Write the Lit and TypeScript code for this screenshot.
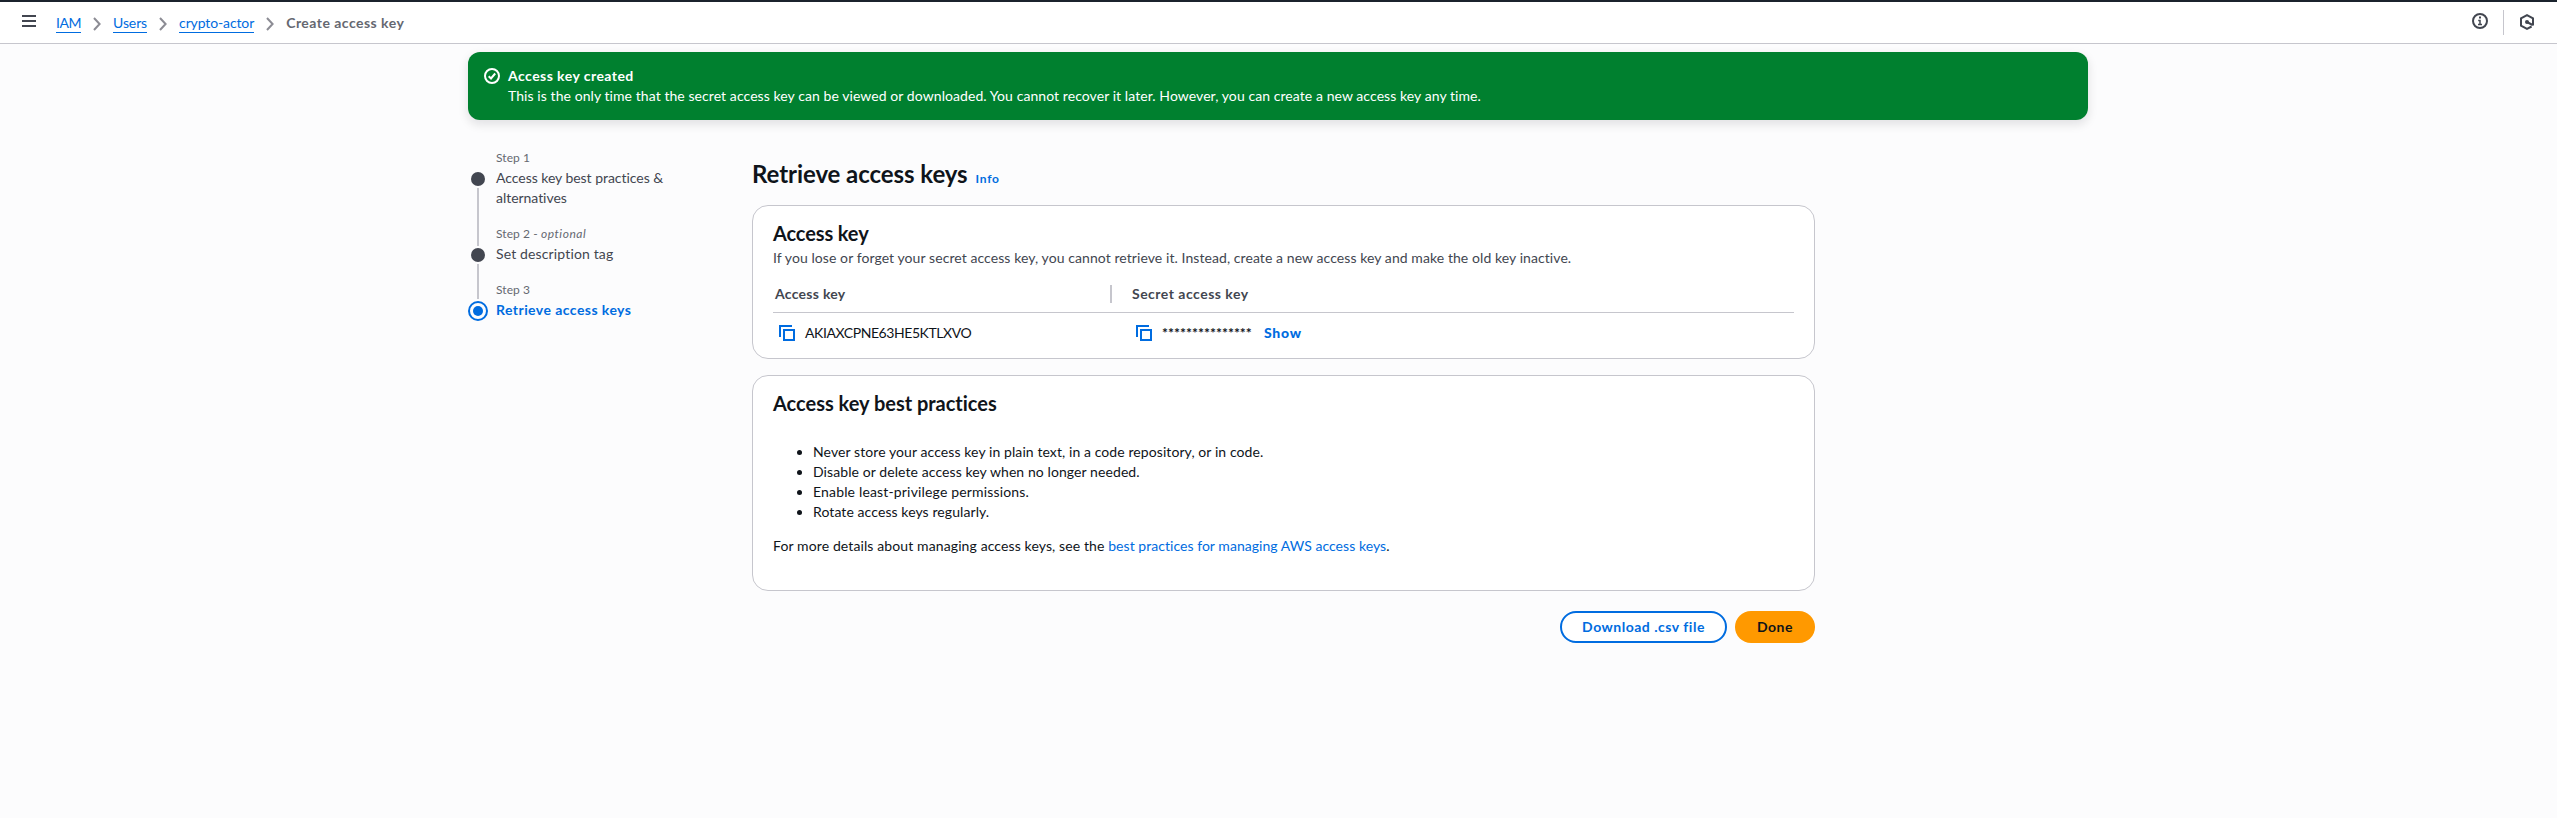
import { LitElement, html, css, nothing } from "lit";
import { customElement, property } from "lit/decorators.js";

const copyIcon = html`<svg class="copy" width="16" height="16" viewBox="0 0 16 16" fill="none" stroke="#006ce0" stroke-width="2">
  <path d="M1 12V1h12" /><rect x="5" y="5" width="10" height="10" />
</svg>`;

const chevron = html`<svg class="chevron" width="8" height="14" viewBox="0 0 8 14" fill="none" stroke="#8c8c94" stroke-width="2">
  <path d="M1 1l5.6 6L1 13" />
</svg>`;

@customElement("app-breadcrumbs")
class AppBreadcrumbs extends LitElement {
  static styles = css`
    :host { display: flex; height: 41px; background: #fff; border-top: 2px solid #1b232d; border-bottom: 1px solid #c6c6cd; box-sizing: content-box; }
    svg { display: block; flex: none; }
    .menu { margin: 13px 20px 0 22px; }
    .trail { display: flex; gap: 12px; padding-top: 11px; flex: 1; }
    .link { display: block; height: 19px; line-height: 19px; border-bottom: 1px solid #006ce0; color: #006ce0; white-space: nowrap; }
    .iam { letter-spacing: -0.46px; }
    .users { letter-spacing: -0.1px; }
    .user { letter-spacing: -0.12px; }
    .chevron { margin-top: 4px; }
    .current { line-height: 19px; font-weight: 700; color: #656871; letter-spacing: 0.47px; white-space: nowrap; }
    .tools { display: flex; }
    .info { margin: 11px 15px 0 0; }
    .rule { width: 1px; height: 25px; margin-top: 8px; background: #c6c6cd; }
    .hex { margin: 11px 22px 0 15px; }
  `;
  render() {
    return html`
      <svg class="menu" width="14" height="12" viewBox="0 0 14 12" stroke="#424650" stroke-width="2"><path d="M0 1h14M0 6h14M0 11h14" /></svg>
      <nav class="trail">
        <a class="link iam">IAM</a>${chevron}
        <a class="link users">Users</a>${chevron}
        <a class="link user">crypto-actor</a>${chevron}
        <span class="current">Create access key</span>
      </nav>
      <div class="tools">
        <svg class="info" width="16" height="16" viewBox="0 0 16 16" fill="none" stroke="#424650" stroke-width="2">
          <circle cx="8" cy="8" r="7" /><path d="M6.2 7.5H8V11.5M6 11.5h4" stroke-width="1.5" /><path d="M7 4.5h2" />
        </svg>
        <div class="rule"></div>
        <svg class="hex" width="16" height="18" viewBox="0 0 16 18" fill="none" stroke="#424650" stroke-width="2">
          <path d="M14 12.4V5.3L8 2.1 2 5.3v7.4l6 3.2 4.6-2.4" /><circle cx="8" cy="9" r="2" fill="#424650" stroke="none" /><path d="M8 9l5.6 3" />
        </svg>
      </div>
    `;
  }
}

@customElement("app-step")
class AppStep extends LitElement {
  @property() label = "";
  @property({ type: Boolean }) optional = false;
  @property({ type: Boolean, reflect: true }) active = false;
  @property({ type: Boolean, reflect: true }) beforeactive = false;
  static styles = css`
    :host { display: grid; grid-template-columns: 20px 1fr; column-gap: 8px; }
    .rail { display: flex; flex-direction: column; align-items: center; padding-top: 22px; }
    .dot { width: 14px; height: 14px; border-radius: 50%; background: #424650; flex: none; }
    .line { width: 2px; flex: 1; margin: 2px 0 -20px; background: #c6c6cd; }
    :host([beforeactive]) .line { margin-bottom: -17px; }
    :host([active]) .rail { padding-top: 19px; }
    :host([active]) .dot { box-sizing: border-box; width: 20px; height: 20px; border: 2px solid #006ce0; background: #006ce0 content-box; padding: 3px; }
    .text { padding-bottom: 18px; }
    .label { font-size: 12px; line-height: 16px; color: #656871; margin-bottom: 2px; letter-spacing: 0.08px; }
    .label em { letter-spacing: 0.55px; }
    .title { line-height: 20px; color: #424650; width: 180px; letter-spacing: -0.04px; }
    :host([beforeactive]) .title { letter-spacing: 0.14px; }
    :host([active]) .title { color: #006ce0; font-weight: 700; letter-spacing: 0.44px; }
  `;
  render() {
    return html`
      <div class="rail"><div class="dot"></div>${this.active ? nothing : html`<div class="line"></div>`}</div>
      <div class="text">
        <div class="label">${this.label}${this.optional ? html` - <em>optional</em>` : nothing}</div>
        <div class="title"><slot></slot></div>
      </div>
    `;
  }
}

@customElement("app-root")
class AppRoot extends LitElement {
  static styles = css`
    :host { display: block; min-height: 818px; background: #fcfcfd; color: #0f141a; font: 400 14px/20px Lato, "Open Sans", sans-serif; font-variant-ligatures: none; }
    svg { display: block; flex: none; }
    .page { width: 1620px; margin-left: 468px; padding-top: 8px; }
    .flash { display: flex; gap: 8px; height: 68px; box-sizing: border-box; padding: 14px 16px; border-radius: 12px; background: #00802f; color: #fff; box-shadow: 0 4px 10px 1px rgba(0, 7, 22, 0.1); white-space: nowrap; }
    .check { margin-top: 2px; }
    .flash-title { font-weight: 700; letter-spacing: 0.45px; }
    .flash-body { letter-spacing: 0.071px; }
    .columns { display: grid; grid-template-columns: 284px 1063px; }
    .steps { padding-top: 30px; }
    .main { padding-top: 39px; }
    .heading { display: flex; align-items: baseline; gap: 8px; margin-bottom: 16px; height: 30px; }
    h1, h2, p, ul { margin: 0; }
    h1 { font-size: 24px; line-height: 30px; letter-spacing: -0.07px; }
    .info { font-size: 12px; font-weight: 700; color: #006ce0; letter-spacing: 0.7px; }
    .card { box-sizing: border-box; border: 1px solid #c6c6cd; border-radius: 16px; background: #fff; padding: 15px 20px 0; margin-bottom: 16px; }
    .keys { height: 154px; }
    .practices { height: 216px; margin-bottom: 20px; }
    h2 { font-size: 20px; line-height: 24px; letter-spacing: -0.02px; }
    .keys h2 { letter-spacing: -0.12px; }
    .desc { color: #424650; margin-top: 3px; letter-spacing: 0.075px; }
    .row { display: grid; grid-template-columns: 339px 1fr; }
    .head { margin-top: 16px; padding-bottom: 8px; border-bottom: 1px solid #c6c6cd; color: #424650; font-weight: 700; }
    .first { padding-left: 2px; border-right: 2px solid #c6c6cd; line-height: 18px; margin-top: 1px; letter-spacing: 0.28px; height: 18px; }
    .second { padding-left: 20px; letter-spacing: 0.49px; }
    .values { padding-top: 10px; }
    .cell { display: flex; gap: 10px; padding-left: 6px; }
    .secret { padding-left: 24px; }
    .copy { margin-top: 2px; }
    .id { letter-spacing: -0.42px; }
    .mask { width: 91px; font-weight: 700; letter-spacing: 0.04px; }
    .show { color: #006ce0; font-weight: 900; letter-spacing: 0.75px; margin-left: 1px; }
    ul { list-style: none; padding: 0 0 0 24px; margin-top: 27px; }
    li { display: flex; gap: 11px; letter-spacing: 0.085px; }
    li:nth-child(3) { letter-spacing: 0.164px; }
    li::before { content: ""; width: 5px; height: 5px; border-radius: 50%; background: #0f141a; margin-top: 8px; }
    .more { margin-top: 14px; letter-spacing: 0.112px; }
    .more a { color: #006ce0; letter-spacing: 0.04px; }
    .actions { display: flex; justify-content: flex-end; gap: 8px; }
    .btn { box-sizing: border-box; height: 32px; border-radius: 16px; font-weight: 700; letter-spacing: 0.508px; text-align: center; padding-top: 6px; }
    .download { width: 167px; border: 2px solid #006ce0; background: #fff; color: #006ce0; padding-top: 4px; }
    .done { width: 80px; background: #ff9900; }
  `;
  render() {
    return html`
      <app-breadcrumbs></app-breadcrumbs>
      <div class="page">
        <div class="flash">
          <svg class="check" width="16" height="16" viewBox="0 0 16 16" fill="none" stroke="#fff" stroke-width="2">
            <circle cx="8" cy="8" r="7" /><path d="M4.7 8.2l2.3 2.3 4.2-5" />
          </svg>
          <div>
            <div class="flash-title">Access key created</div>
            <div class="flash-body">This is the only time that the secret access key can be viewed or downloaded. You cannot recover it later. However, you can create a new access key any time.</div>
          </div>
        </div>
        <div class="columns">
          <div class="steps">
            <app-step label="Step 1">Access key best practices &amp; alternatives</app-step>
            <app-step label="Step 2" optional beforeactive>Set description tag</app-step>
            <app-step label="Step 3" active>Retrieve access keys</app-step>
          </div>
          <div class="main">
            <div class="heading"><h1>Retrieve access keys</h1><a class="info">Info</a></div>
            <section class="card keys">
              <h2>Access key</h2>
              <p class="desc">If you lose or forget your secret access key, you cannot retrieve it. Instead, create a new access key and make the old key inactive.</p>
              <div class="row head"><div class="first">Access key</div><div class="second">Secret access key</div></div>
              <div class="row values">
                <div class="cell">${copyIcon}<span class="id">AKIAXCPNE63HE5KTLXVO</span></div>
                <div class="cell secret">${copyIcon}<span class="mask">***************</span><a class="show">Show</a></div>
              </div>
            </section>
            <section class="card practices">
              <h2>Access key best practices</h2>
              <ul>
                <li>Never store your access key in plain text, in a code repository, or in code.</li>
                <li>Disable or delete access key when no longer needed.</li>
                <li>Enable least-privilege permissions.</li>
                <li>Rotate access keys regularly.</li>
              </ul>
              <p class="more">For more details about managing access keys, see the <a>best practices for managing AWS access keys</a>.</p>
            </section>
            <div class="actions"><div class="btn download">Download .csv file</div><div class="btn done">Done</div></div>
          </div>
        </div>
      </div>
    `;
  }
}
